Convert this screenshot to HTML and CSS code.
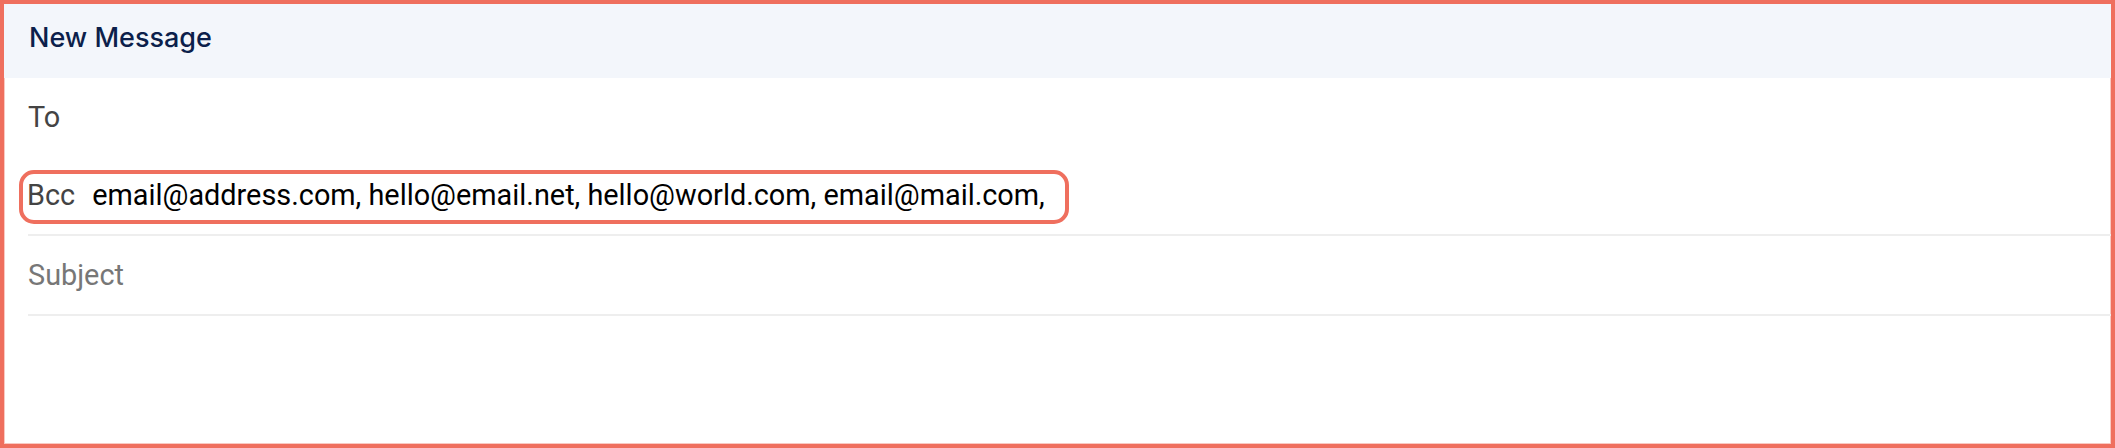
FILE: index.html
```html
<!DOCTYPE html>
<html lang="en">
<head>
<meta charset="utf-8">
<title>New Message</title>
<link rel="stylesheet" href="styles.css">
</head>
<body>
<div class="compose">
  <div class="header">New Message</div>
  <div class="fields">
    <div class="row row-to"><span class="label">To</span></div>
    <div class="row row-bcc">
      <div class="bcc-box">
        <span class="label">Bcc</span>
        <span class="emails">email@address.com, hello@email.net, hello@world.com, email@mail.com,</span>
      </div>
    </div>
    <div class="row row-subject"><span class="placeholder">Subject</span></div>
  </div>
</div>
</body>
</html>
```

FILE: styles.css
```css
* { box-sizing: border-box; }
html, body { margin: 0; padding: 0; background: #ffffff; }
.compose {
  width: 2115px;
  height: 448px;
  border: 4px solid #ef6f5e;
  box-shadow: inset 0 0 0 1px #f9c9c2;
  background: #ffffff;
  display: flex;
  flex-direction: column;
  overflow: hidden;
}
.header {
  height: 74px;
  flex: none;
  background: #f3f6fb;
  display: flex;
  align-items: center;
  padding: 0 0 8px 25px;
  font-family: Inter, "Noto Sans", sans-serif;
  font-weight: 500;
  font-size: 27px;
  color: #0c1f4b;
}
.fields {
  padding-left: 24px;
  display: flex;
  flex-direction: column;
  font-family: Roboto, "Liberation Sans", sans-serif;
  font-size: 28.85px;
}
.row {
  height: 78px;
  display: flex;
  align-items: center;
}
.row-bcc, .row-subject {
  height: 80px;
  border-bottom: 2px solid #eeeeee;
}
.label { color: #444444; }
.placeholder { color: #777777; }
.bcc-box {
  height: 54px;
  margin-top: 3px;
  margin-left: -9px;
  border: 4px solid #ef6f5e;
  border-radius: 15px;
  display: flex;
  align-items: center;
  gap: 17px;
  padding: 0 20px 4px 4px;
}
.emails { color: #000000; }
```
